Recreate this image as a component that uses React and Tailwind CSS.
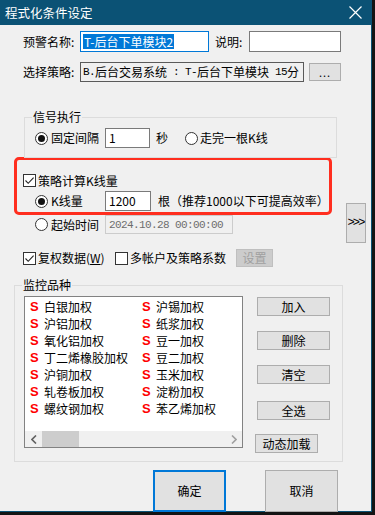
import React from "react";

const Radio = ({ checked }) => (
  <span className="w-[13px] h-[13px] rounded-full border border-[#333333] bg-white flex items-center justify-center shrink-0">
    {checked && <span className="w-[7px] h-[7px] rounded-full bg-[#111111]" />}
  </span>
);

const Check = ({ checked }) => (
  <span className="w-[13px] h-[13px] border border-[#333333] bg-white flex items-center justify-center shrink-0">
    {checked && (
      <svg width="11" height="11" viewBox="0 0 11 11">
        <path d="M1.5 5.5 L4.2 8.3 L9.6 2.6" fill="none" stroke="#222" strokeWidth="1.1" />
      </svg>
    )}
  </span>
);

const Half = ({ children }) => (
  <span className="font-['Liberation_Mono',monospace] text-[11px] tracking-[-0.6px] whitespace-pre">
    {children}
  </span>
);

const col1 = ["白银加权", "沪铝加权", "氧化铝加权", "丁二烯橡胶加权", "沪铜加权", "轧卷板加权", "螺纹钢加权"];
const col2 = ["沪锡加权", "纸浆加权", "豆一加权", "豆二加权", "玉米加权", "淀粉加权", "苯乙烯加权"];

const Item = ({ name }) => (
  <div className="h-[17px] flex items-center">
    <span className="w-[14px] text-[#ff0000] font-bold font-['Liberation_Sans',sans-serif] text-[13px]">S</span>
    <span className="whitespace-nowrap">{name}</span>
  </div>
);

const btn = "bg-[#e1e1e1] border border-[#adadad] flex items-center justify-center";

export default function App() {
  return (
    <div className="w-[375px] h-[515px] bg-[#141414] overflow-hidden font-['Noto_Sans_CJK_SC',sans-serif] text-[12px] leading-[16px] text-black">
      <div className="w-[372px] h-[512px] bg-[#f0f0f0] border-r border-b border-[#0b5275] flex flex-col">
        {/* title bar */}
        <div className="h-[25px] shrink-0 bg-[#0b5275] flex items-center justify-between pl-[5px] pr-[9px] text-white text-[12.5px]">
          <span>程式化条件设定</span>
          <svg width="13" height="13" viewBox="0 0 13 13">
            <path d="M0.5 0.5 L12.5 12.5 M12.5 0.5 L0.5 12.5" stroke="#fff" strokeWidth="1.2" />
          </svg>
        </div>

        {/* name row */}
        <div className="mt-[6px] h-[21px] flex items-center pl-[23px]">
          <span className="w-[57px]">预警名称:</span>
          <div className="w-[129px] h-[21px] border border-[#0078d7] bg-white flex items-center pl-[2px]">
            <span className="bg-[#0078d7] text-white leading-[15px] px-[1px]">T-后台下单模块2</span>
          </div>
          <span className="ml-[6px] w-[34px]">说明:</span>
          <div className="w-[92px] h-[21px] border border-[#7a7a7a] bg-white" />
        </div>

        {/* strategy row */}
        <div className="mt-[10px] h-[20px] flex items-center pl-[23px]">
          <span className="w-[57px]">选择策略:</span>
          <div className="w-[224px] h-[20px] border border-[#5a5a5a] bg-[#f0f0f0] flex items-center pl-[2px] overflow-hidden whitespace-nowrap">
            <Half>B.</Half>后台交易系统<Half> : T-</Half>后台下单模块<Half> 15</Half>分
          </div>
          <div className={`${btn} ml-[5px] w-[32px] h-[18px] text-[11px] tracking-[1px]`}>...</div>
        </div>

        {/* signal group */}
        <div className="mt-[35px] ml-[24px] w-[313px] h-[41px] shrink-0 border border-[#dcdcdc] relative">
          <span className="absolute left-[7px] -top-[9px] bg-[#f0f0f0] px-[1px]">信号执行</span>
          <div className="mt-[10px] h-[20px] flex items-center pl-[10px]">
            <Radio checked />
            <span className="ml-[3px] w-[54px]">固定间隔</span>
            <div className="w-[45px] h-[20px] border border-[#7a7a7a] bg-white flex items-center pl-[3px]">1</div>
            <span className="ml-[6px]">秒</span>
            <span className="ml-[17px]"><Radio /></span>
            <span className="ml-[2px]">走完一根K线</span>
          </div>
        </div>

        {/* red area + side button */}
        <div className="-mt-[1px] flex">
          <div className="flex flex-col">
            <div className="ml-[14px] w-[318px] h-[58px] border-[3px] border-[#ff2e1f] rounded-[5px]">
              <div className="mt-[14px] h-[13px] flex items-center pl-[6px]">
                <Check checked />
                <span className="ml-[2px]">策略计算K线量</span>
              </div>
              <div className="mt-[4px] h-[20px] flex items-center pl-[18px]">
                <Radio checked />
                <span className="ml-[3px] w-[54px]">K线量</span>
                <div className="w-[46px] h-[20px] border border-[#7a7a7a] bg-white flex items-center pl-[3px]">1200</div>
                <span className="ml-[7px] whitespace-nowrap">根（推荐1000以下可提高效率）</span>
              </div>
            </div>
            <div className="h-[19px] flex items-center pl-[35px]">
              <Radio />
              <span className="ml-[3px] w-[54px]">起始时间</span>
              <div className="w-[128px] h-[19px] border border-[#cccccc] bg-[#f0f0f0] flex items-center pl-[3px] text-[#6d6d6d]">
                <Half>2024.10.28 00:00:00</Half>
              </div>
            </div>
          </div>
          <div className={`${btn} ml-[14px] mt-[46px] w-[20px] h-[40px] font-['Liberation_Mono',monospace] text-[12px] tracking-[-1.8px] pr-[1px]`}>&gt;&gt;&gt;</div>
        </div>

        {/* options row */}
        <div className="mt-[6px] h-[18px] flex items-center pl-[23px]">
          <Check checked />
          <span className="ml-[2px] w-[77px]">复权数据(<span className="underline">W</span>)</span>
          <Check />
          <span className="ml-[2px] w-[104px]">多帐户及策略系数</span>
          <div className="ml-[2px] w-[37px] h-[18px] bg-[#cccccc] border border-[#bfbfbf] text-[#a0a0a0] flex items-center justify-center">设置</div>
        </div>

        {/* monitor group */}
        <div className="mt-[18px] ml-[14px] w-[329px] h-[177px] shrink-0 border border-[#dcdcdc] relative flex">
          <span className="absolute left-[7px] -top-[9px] bg-[#f0f0f0] px-[1px]">监控品种</span>
          <div className="ml-[9px] mt-[10px] w-[219px] h-[152px] border border-[#828282] bg-white flex flex-col">
            <div className="pt-[1px] pl-[5px] flex">
              <div className="w-[112px]">
                {col1.map((n) => <Item key={n} name={n} />)}
              </div>
              <div>
                {col2.map((n) => <Item key={n} name={n} />)}
              </div>
            </div>
            <div className="mt-auto h-[16px] bg-[#f0f0f0] flex items-center">
              <div className="w-[17px] flex justify-center">
                <svg width="6" height="9" viewBox="0 0 6 9">
                  <path d="M5 0.5 L1 4.5 L5 8.5" fill="none" stroke="#606060" strokeWidth="1.6" />
                </svg>
              </div>
              <div className="w-[37px] h-[16px] bg-[#cdcdcd]" />
              <div className="flex-1" />
              <div className="w-[17px] flex justify-center">
                <svg width="6" height="9" viewBox="0 0 6 9">
                  <path d="M1 0.5 L5 4.5 L1 8.5" fill="none" stroke="#a0a0a0" strokeWidth="1.6" />
                </svg>
              </div>
            </div>
          </div>
          <div className="ml-[14px] flex flex-col">
            <div className={`${btn} mt-[11px] w-[73px] h-[19px]`}>加入</div>
            <div className={`${btn} mt-[15px] w-[73px] h-[19px]`}>删除</div>
            <div className={`${btn} mt-[15px] w-[73px] h-[19px]`}>清空</div>
            <div className={`${btn} mt-[17px] w-[73px] h-[19px]`}>全选</div>
            <div className={`${btn} mt-[14px] -ml-[2px] w-[63px] h-[19px]`}>动态加载</div>
          </div>
        </div>

        {/* bottom buttons */}
        <div className="mt-[8px] flex pl-[153px]">
          <div className="w-[73px] h-[42px] bg-[#e1e1e1] border-2 border-[#0078d7] flex items-center justify-center">确定</div>
          <div className={`${btn} ml-[39px] w-[73px] h-[42px]`}>取消</div>
        </div>
      </div>
    </div>
  );
}
